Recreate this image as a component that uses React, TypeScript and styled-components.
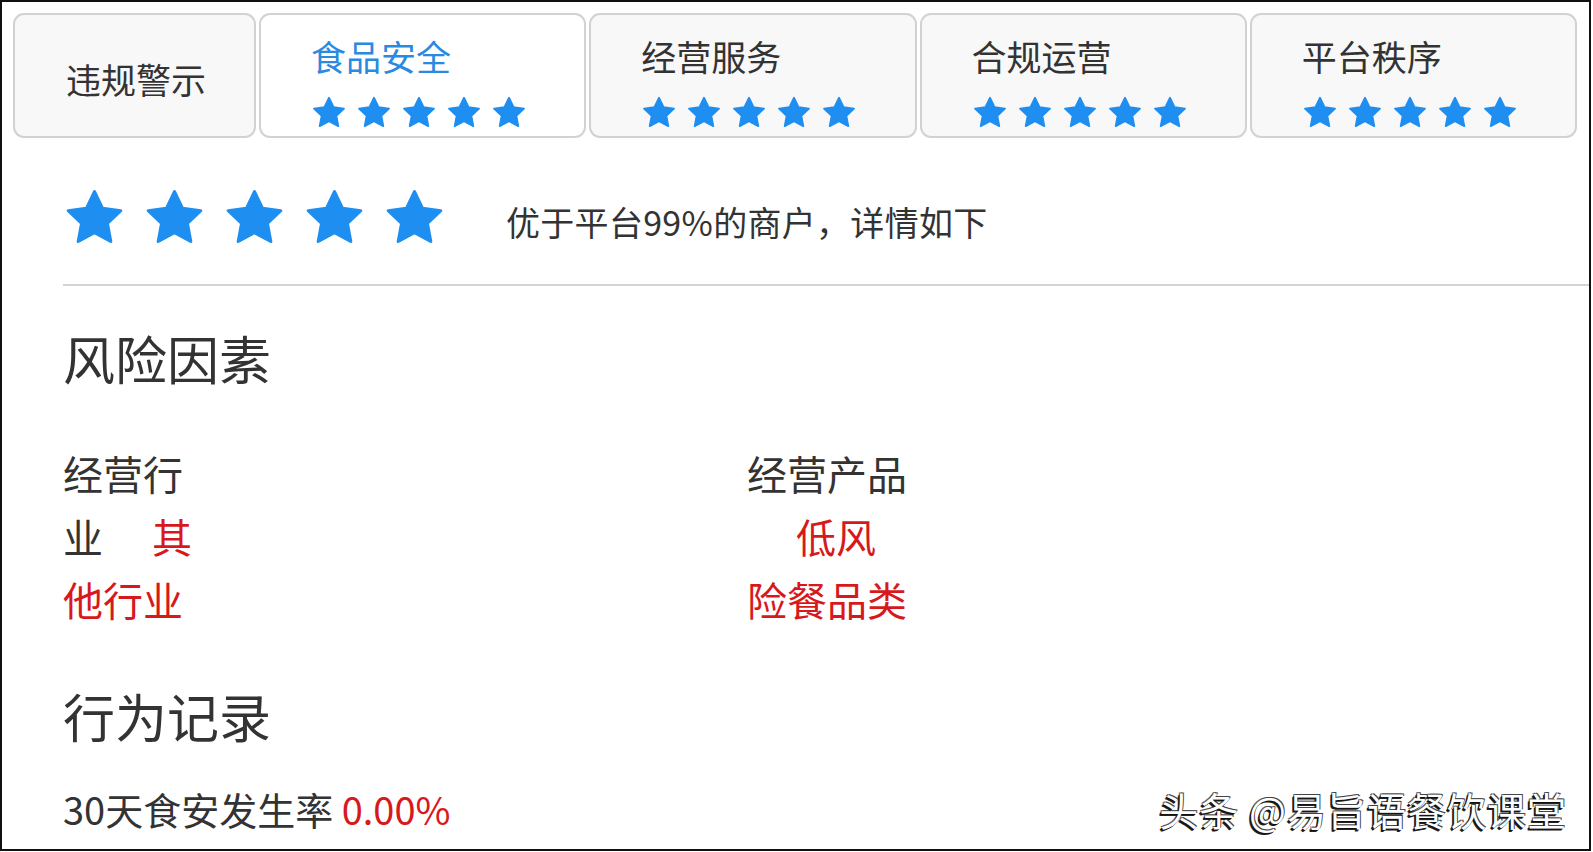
import React from "react";
import styled, { createGlobalStyle } from "styled-components";

const GlobalStyle = createGlobalStyle`
  html, body {
    margin: 0;
    padding: 0;
    background: #fff;
  }
  body {
    font-family: "Noto Sans CJK SC", "Noto Sans", sans-serif;
    color: #333;
  }
`;

const Frame = styled.div`
  position: relative;
  box-sizing: border-box;
  width: 1591px;
  height: 851px;
  border: 2px solid #111;
  background: #fff;
  overflow: hidden;
`;

const TabBar = styled.div`
  display: flex;
  gap: 3px;
  padding: 11px 12px 0 11px;
`;

const Tab = styled.div<{ $active?: boolean; $width?: number }>`
  box-sizing: border-box;
  height: 125px;
  ${(p) => (p.$width ? `width: ${p.$width}px; flex: none;` : "flex: 1;")}
  border: 2px solid #d2d2d2;
  border-radius: 11px;
  background: ${(p) => (p.$active ? "#fff" : "#f8f8f8")};
  padding: 19px 0 0 50px;
  display: flex;
  flex-direction: column;
`;

const PlainTab = styled(Tab)`
  padding: 6px 0 0 51px;
  justify-content: center;
`;

const TabTitle = styled.div<{ $active?: boolean }>`
  font-size: 35px;
  line-height: 44px;
  color: ${(p) => (p.$active ? "#2a8ae0" : "#333")};
`;

const Stars = styled.div<{ $gap: number }>`
  display: flex;
  gap: ${(p) => p.$gap}px;
`;

const SmallStars = styled(Stars)`
  margin-top: 17px;
`;

const Content = styled.div`
  padding-left: 61px;
`;

const ScoreRow = styled.div`
  height: 100px;
  margin-top: 30px;
  display: flex;
  align-items: center;
  gap: 60px;
`;

const ScoreText = styled.div`
  font-size: 34px;
  color: #333;
  letter-spacing: 0.3px;
  padding-top: 6px;
`;

const Divider = styled.div`
  height: 2px;
  background: #d4d4d4;
  margin-top: 16px;
`;

const SectionTitle = styled.h2<{ $top: number }>`
  margin: ${(p) => p.$top}px 0 0;
  font-size: 52px;
  line-height: 73px;
  font-weight: 400;
  color: #333;
`;

const ItemGrid = styled.div`
  display: grid;
  grid-template-columns: 684px 1fr;
  margin-top: 48px;
`;

const Item = styled.div<{ $width: number }>`
  width: ${(p) => p.$width}px;
  font-size: 40px;
  line-height: 63px;
  color: #333;
`;

const Value = styled.span`
  margin-left: 49px;
  color: #d7191c;
`;

const Record = styled.div`
  margin-top: 27px;
  font-size: 38px;
  line-height: 60px;
  color: #333;
`;

const Rate = styled.span`
  color: #d7191c;
`;

const Watermark = styled.div`
  position: absolute;
  right: 22px;
  bottom: 20px;
  font-size: 39px;
  line-height: 1;
  color: #fff;
  letter-spacing: 1px;
  text-shadow: -1px 1px 0 #111, -2px 2px 0 #222, 1px -1px 0 #444, -1px -1px 0 #666;
`;

const Star = ({ size }: { size: number }) => (
  <svg width={size} height={size} viewBox="0 0 24 24">
    <path
      d="M12 1.8l3.05 6.35 6.95.88-5.1 4.82 1.3 6.9L12 17.4l-6.2 3.35 1.3-6.9-5.1-4.82 6.95-.88z"
      fill="#1f8ef1"
      stroke="#1f8ef1"
      strokeWidth="1.2"
      strokeLinejoin="round"
    />
  </svg>
);

const StarGroup = ({ size, gap, small }: { size: number; gap: number; small?: boolean }) => {
  const Wrap = small ? SmallStars : Stars;
  return (
    <Wrap $gap={gap}>
      {[0, 1, 2, 3, 4].map((i) => (
        <Star key={i} size={size} />
      ))}
    </Wrap>
  );
};

const tabs = [
  { title: "食品安全", active: true },
  { title: "经营服务" },
  { title: "合规运营" },
  { title: "平台秩序" },
];

export default function App() {
  return (
    <>
      <GlobalStyle />
      <Frame>
        <TabBar>
          <PlainTab $width={243}>
            <TabTitle>违规警示</TabTitle>
          </PlainTab>
          {tabs.map((t) => (
            <Tab key={t.title} $active={t.active}>
              <TabTitle $active={t.active}>{t.title}</TabTitle>
              <StarGroup size={36} gap={9} small />
            </Tab>
          ))}
        </TabBar>

        <Content>
          <ScoreRow>
            <StarGroup size={63} gap={17} />
            <ScoreText>优于平台99%的商户，详情如下</ScoreText>
          </ScoreRow>
          <Divider />

          <SectionTitle $top={35}>风险因素</SectionTitle>
          <ItemGrid>
            <Item $width={130}>
              经营行业<Value>其他行业</Value>
            </Item>
            <Item $width={162}>
              经营产品<Value>低风险餐品类</Value>
            </Item>
          </ItemGrid>

          <SectionTitle $top={48}>行为记录</SectionTitle>
          <Record>
            30天食安发生率 <Rate>0.00%</Rate>
          </Record>
        </Content>

        <Watermark>头条 @易旨语餐饮课堂</Watermark>
      </Frame>
    </>
  );
}
